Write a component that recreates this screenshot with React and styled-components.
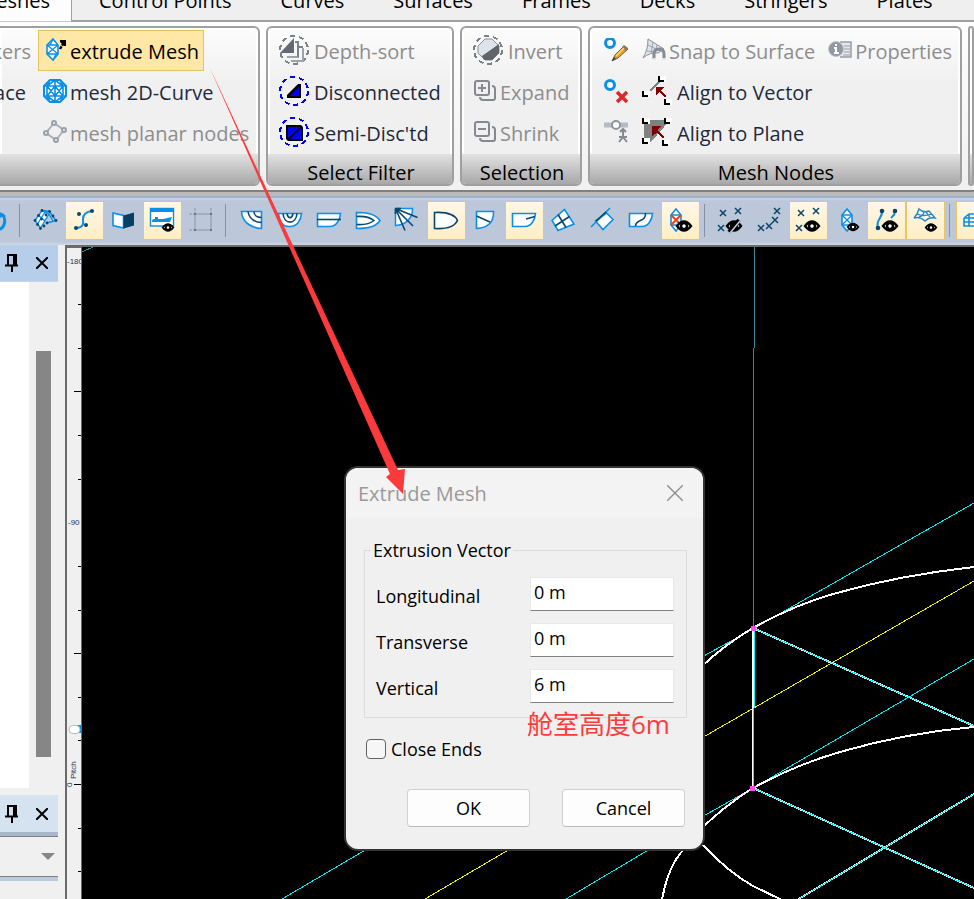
import React, { useState } from 'react'
import styled, { createGlobalStyle } from 'styled-components'

const GlobalStyle = createGlobalStyle`
    *{
        box-sizing: border-box;
    }
    body{
        margin: 0;
        background: #f0f0f0;
        font-family: 'Open Sans', 'Noto Sans', 'Noto Sans CJK SC', sans-serif;
        font-size: 20px;
        color: #000;
        overflow: hidden;
    }
    button, input{
        font: inherit;
        color: inherit;
        margin: 0;
    }
    svg{
        display: block;
        flex: none;
    }
`

const Page = styled.div`
    position: relative;
    display: flex;
    flex-direction: column;
    height: 100vh;
    overflow: hidden;
`

/* ---------- tabs ---------- */

const TabBar = styled.nav`
    display: flex;
    flex: none;
    height: 22px;
    overflow: hidden;
    background: #efefef;
`

const Tab = styled.button`
    display: flex;
    flex: none;
    align-items: flex-end;
    justify-content: flex-end;
    height: 22px;
    padding: 0 22px 6px 27px;
    border: 0;
    border-bottom: 2px solid #a0a0a0;
    background: transparent;
    line-height: 26px;
    white-space: nowrap;
    ${({ $active }) => $active && `
        width: 72px;
        padding: 0 21px 7px 0;
        background: #fdfdfd;
        border-right: 1px solid #a0a0a0;
        border-bottom: 1px solid #c8c8c8;
        overflow: hidden;
    `}
`

const TabFill = styled.div`
    flex: 1;
    border-bottom: 2px solid #a0a0a0;
`

/* ---------- ribbon ---------- */

const Ribbon = styled.div`
    display: flex;
    flex: none;
    gap: 6px;
    padding: 4px 0;
    background: linear-gradient(#ffffff, #f0f0f0);
`

const Group = styled.section`
    display: flex;
    flex-direction: column;
    flex: ${({ $width }) => ($width ? `0 0 ${$width}px` : '1')};
    height: 160px;
    border: 2px solid #a0a0a0;
    border-left-width: ${({ $cut }) => ($cut ? 0 : 2)}px;
    border-radius: ${({ $cut }) => ($cut ? '0 6px 6px 0' : '6px')};
    background: linear-gradient(#fcfcfc, #f0f0f0 35%);
    box-shadow: inset 0 0 0 2px #fff;
    overflow: hidden;
`

const GroupBody = styled.div`
    display: flex;
    flex: 1;
    gap: ${({ $gap }) => $gap || 0}px;
    padding: 2px 0 0 ${({ $pad }) => $pad}px;
`

const GroupTitle = styled.h2`
    flex: none;
    height: 30px;
    margin: 0;
    padding: 6px 0 0 2px;
    background: linear-gradient(#e2e2e2, #a8a8a8);
    font-size: 20px;
    font-weight: 400;
    line-height: 26px;
    text-align: center;
`

const Column = styled.div`
    display: flex;
    flex-direction: column;
    align-items: flex-start;
    flex: none;
`

const CutColumn = styled(Column)`
    width: 38px;
    align-items: flex-end;
    overflow: hidden;
`

const Row = styled.div`
    display: flex;
    gap: 3px;
`

const Command = styled.button`
    display: flex;
    flex: none;
    align-items: center;
    gap: ${({ $wide }) => ($wide ? 5 : 3)}px;
    height: 41px;
    padding: 2px 4px 0;
    border: 1px solid ${({ $active }) => ($active ? '#e5c365' : 'transparent')};
    background: ${({ $active }) => ($active ? '#ffe8a6' : 'transparent')};
    color: ${({ $active }) => ($active ? '#000' : '#1e2a3c')};
    line-height: 26px;
    white-space: nowrap;
    &:disabled{
        color: #8d8d8d;
    }
    svg{
        margin-top: -4px;
    }
`

const CutCommand = styled(Command)`
    padding-right: ${({ $inset }) => $inset}px;
`

/* ---------- toolbar ---------- */

const ToolBar = styled.div`
    display: flex;
    flex: none;
    height: 55px;
    padding-top: 4px;
    border-top: 2px solid #808080;
    background: linear-gradient(#bababa 4px, #9fb0cc 4px, #9fb0cc 6px, #c9d4e5 6px, #bcc7d9 9px, #bcc7d9 50px, #cbd5e4 52px);
    overflow: hidden;
`

const Tool = styled.button`
    display: flex;
    flex: 0 0 ${({ $cut }) => ($cut ? 15 : 39)}px;
    justify-content: flex-end;
    align-items: center;
    height: 39px;
    margin-top: 5px;
    padding: 0;
    border: 0;
    outline: ${({ $on }) => ($on ? '1px solid #e8c566' : 'none')};
    outline-offset: -1px;
    background: ${({ $on }) => ($on ? 'linear-gradient(#fff8e8, #ffeec4)' : 'transparent')};
    overflow: hidden;
`

const Divider = styled.span`
    flex: none;
    width: 1px;
    height: 33px;
    margin: 8px 6px 0 4px;
    background: #8592a6;
`

/* ---------- work area ---------- */

const WorkArea = styled.main`
    display: flex;
    flex: 1;
    min-height: 0;
    background: #f0f0f0;
`

const SidePanels = styled.aside`
    display: flex;
    flex-direction: column;
    flex: 0 0 58px;
    margin-right: 7px;
`

const PanelHeader = styled.header`
    display: flex;
    flex: none;
    align-items: center;
    gap: 17px;
    height: 37px;
    padding-left: 5px;
    background: ${({ $pale }) => ($pale ? '#d5e3f0' : '#b6cee9')};
    border-bottom: ${({ $pale }) => ($pale ? '0' : '1px solid #c5d5e8')};
`

const PanelButton = styled.button`
    display: flex;
    padding: 0;
    border: 0;
    background: transparent;
`

const PanelBody = styled.div`
    display: flex;
    flex: 1;
    justify-content: flex-end;
    margin-bottom: 7px;
    background: #fff;
`

const ScrollTrack = styled.div`
    width: 29px;
    padding: 69px 7px 31px;
    background: #f0f0f0;
`

const ScrollThumb = styled.div`
    height: 100%;
    background: #868686;
`

const PickerBox = styled.button`
    display: flex;
    flex: none;
    justify-content: flex-end;
    align-items: center;
    height: 49px;
    padding: 0 3px 0 0;
    border: solid;
    border-width: 4px 0;
    border-color: #a9b6cc #f0f0f0 #bccade;
    background: #f0f0f0;
    box-shadow: inset 0 1px #808080, inset 0 -1px #808080;
`

const BottomFill = styled.div`
    flex: 0 0 18px;
`

const Ruler = styled.div`
    flex: 0 0 17px;
    border: solid #6b6b6b;
    border-width: 3px 1px 0 2px;
    background: #f0f0f0;
    overflow: hidden;
    text{
        font-family: 'Liberation Sans', sans-serif;
        font-size: 8px;
        fill: #2a3550;
    }
`

const Viewport = styled.div`
    position: relative;
    flex: 1;
    border-top: 2px solid #6b6b6b;
    background: #000;
`

const Scene = styled.svg`
    position: absolute;
    inset: 0;
    width: 100%;
    height: 100%;
    fill: none;
`

/* ---------- dialog ---------- */

const Dialog = styled.form`
    position: absolute;
    left: 262px;
    top: 219px;
    width: 361px;
    border: 2px solid #343434;
    border-radius: 14px;
    background: #f0f0f0;
    font-size: 18px;
    overflow: hidden;
`

const DialogTitle = styled.header`
    display: flex;
    align-items: center;
    justify-content: space-between;
    height: 50px;
    padding: 0 20px 0 12px;
    background: #f3f3f3;
    color: #999;
    font-size: 20px;
`

const CloseButton = styled.button`
    padding: 0;
    border: 0;
    background: transparent;
`

const VectorBox = styled.fieldset`
    display: flex;
    flex-direction: column;
    gap: 12px;
    margin: 19px 16px 0 18px;
    padding: 14px 12px 14px 11px;
    border: 1px solid #dcdcdc;
    legend{
        margin-left: -5px;
        padding: 0 2px;
        line-height: 26px;
    }
`

const Field = styled.div`
    display: flex;
    justify-content: space-between;
    label{
        padding-top: 5px;
        line-height: 28px;
    }
    input{
        width: 144px;
        height: 34px;
        padding: 0 3px 5px;
        border: 1px solid #e8e8e8;
        border-bottom-color: #808080;
        background: #fff;
        outline: none;
    }
`

const CheckLabel = styled.label`
    display: flex;
    align-items: center;
    gap: 5px;
    margin: 18px 0 0 20px;
    line-height: 26px;
    input{
        appearance: none;
        width: 20px;
        height: 20px;
        border: 1px solid #626262;
        border-radius: 4px;
        background: #f6f6f6;
    }
    input:checked{
        background: #0067c0;
    }
`

const DialogActions = styled.div`
    display: flex;
    justify-content: flex-end;
    gap: 32px;
    padding: 27px 18px 22px;
`

const PushButton = styled.button`
    width: 123px;
    height: 38px;
    padding: 0;
    border: 1px solid #d0d0d0;
    border-bottom-color: #bcbcbc;
    border-radius: 4px;
    background: #fdfdfd;
`

/* ---------- notes over the window ---------- */

const ArrowNote = styled.svg`
    position: absolute;
    left: 200px;
    top: 60px;
    pointer-events: none;
`

const TextNote = styled.p`
    position: absolute;
    left: 527px;
    top: 705px;
    margin: 0;
    color: #ff3b3b;
    font-size: 26px;
    line-height: 38px;
`

const BLUE = '#0a8fe6'
const NAVY = '#0b466b'

/* ---------- ribbon icons ---------- */

const Icon24 = ({ children }) => (
    <svg width='24' height='24' viewBox='0 0 24 24' fill='none'>{children}</svg>
)

const Icon30 = ({ children }) => (
    <svg width='30' height='30' viewBox='0 0 30 30' fill='none'>{children}</svg>
)

const ExtrudeIcon = () => (
    <Icon24>
        <path d='M10 1 L15 7 V16 L10 22 L4 16 V7 Z' fill='#fff' stroke={BLUE} strokeWidth='1.6' />
        <path d='M4 7 H15 M4 16 H15 M4 7 L15 16 M15 7 L4 16 M10 1 L7 7 M10 22 L13 16' stroke={BLUE} strokeWidth='1.3' />
        <path d='M17 11 L20 6' stroke='#000' strokeWidth='2.4' strokeDasharray='3 1' />
        <path d='M17 2 H23 V8 H21 L17 4 Z' fill='#000' />
    </Icon24>
)

const CurveMeshIcon = () => (
    <Icon24>
        <path d='M7 1 H17 L23 7 V17 L17 23 H7 L1 17 V7 Z' fill='#fff' stroke={BLUE} strokeWidth='2' />
        <path d='M12 1 V23 M1 7 H23 M1 17 H23 M7 1 L4 7 L12 17 L20 7 L17 1 M7 23 L4 17 L12 7 L20 17 L17 23 M12 1 L4 7 V17 L12 23 L20 17 V7 Z' stroke={BLUE} strokeWidth='1.6' />
    </Icon24>
)

const PlanarIcon = () => (
    <Icon24>
        <path d='M11 3 L21 10 L13 20 L3 13 Z' stroke='#a9b0b8' strokeWidth='2' />
        <g fill='#efefef' stroke='#9aa0a8' strokeWidth='2'>
            <circle cx='11' cy='3' r='2' /><circle cx='21' cy='10' r='2' />
            <circle cx='13' cy='20' r='2' /><circle cx='3' cy='13' r='2' />
        </g>
    </Icon24>
)

const Ring = ({ color }) => (
    <circle cx='15' cy='15' r='14' stroke={color} strokeWidth='2' strokeDasharray='5 3.8' shapeRendering='crispEdges' />
)

const DepthIcon = () => (
    <Icon30>
        <Ring color='#7c8087' />
        <path d='M24 13 V26 H12 M19 9 V22 H8' stroke='#9da3ab' strokeWidth='2' />
        <path d='M15 3 V18 H1 Z' fill='#656a72' />
        <path d='M16 7 H19 V22 M20 12 H24' stroke='#7c8087' strokeWidth='2' />
    </Icon30>
)

const DisconnectedIcon = () => (
    <Icon30>
        <Ring color='#0000ff' />
        <path d='M8 21 V19 L19 8 H22 V22 H8 Z' fill='#000' />
        <path d='M11 20 L20 11 V20 Z' fill='#0000ff' />
    </Icon30>
)

const SemiIcon = () => (
    <Icon30>
        <Ring color='#0000ff' />
        <path d='M7 8 H22 L24 10 V24 H9 L7 22 Z' fill='#000' />
        <path d='M9 10 H21 L9 21 Z M22 11 V22 H11 Z' fill='#0000ff' />
    </Icon30>
)

const InvertIcon = () => (
    <Icon30>
        <Ring color='#7c8087' />
        <path d='M12 4 H19 L26 11 V18 L19 25 H12 L5 18 V11 Z' fill='#dfe4ea' stroke='#8a8f96' />
        <path d='M26 9 V18 L19 25 H11 L9 21 Z' fill='#5f646d' />
    </Icon30>
)

const StackIcon = ({ plus }) => (
    <Icon24>
        <rect x='2' y='2' width='14' height='14' rx='2' stroke='#85898f' strokeWidth='2' />
        <path d='M19 7 C21 7 22 8 22 10 V19 Q22 21 20 21 H10 Q7 21 7 18' stroke='#85898f' strokeWidth='2' />
        <path d={plus ? 'M5 9 H13 M9 5 V13' : 'M5 9 H13'} stroke='#85898f' strokeWidth='2' />
    </Icon24>
)

const EditNodeIcon = () => (
    <Icon24>
        <circle cx='6' cy='5' r='4.5' stroke={BLUE} strokeWidth='3' fill='#fff' />
        <path d='M8 23 L11 17 L20 8 L24 11 L14 20 Z' fill='#e2a02c' stroke='#7b5b2c' />
        <path d='M18 9 L20 7 L24 10 L22 13 Z' fill='#8d7468' />
        <path d='M12 18 L20 10' stroke='#ffd56d' strokeWidth='1.5' />
        <path d='M8 23 L10 19 L12 21 Z' fill='#444' />
    </Icon24>
)

const DeleteNodeIcon = () => (
    <Icon24>
        <circle cx='6' cy='6' r='4.5' stroke={BLUE} strokeWidth='3' fill='#fff' />
        <path d='M13 13 L23 23 M23 13 L13 23' stroke='#dc2a2a' strokeWidth='3.5' />
    </Icon24>
)

const SplitNodeIcon = () => (
    <Icon24>
        <path d='M0 5 H24' stroke='#b4bbc4' strokeWidth='5' />
        <circle cx='12' cy='5' r='4' fill='#fff' stroke='#8f959d' strokeWidth='2' />
        <path d='M19 9 V17 L15 22 M19 17 L23 22 M16 12 L19 9 L22 12 M15 17 H23' stroke='#858a91' strokeWidth='2' />
    </Icon24>
)

const SnapIcon = () => (
    <Icon24>
        <path d='M6 1 L22 11 L16 15 Q8 14 1 20 Q6 12 6 1 Z' fill='#dfe5ea' stroke='#8a9097' />
        <path d='M11 4 L9 16 M15 7 L13 15 M6 7 L18 13 M5 13 L14 14' stroke='#9aa0a8' />
        <path d='M12 21 V16 Q12 11 17 11 Q22 11 22 16 V21' stroke='#868c94' strokeWidth='3' />
        <path d='M11 21 H14 M20 21 H24' stroke='#dfe5ea' strokeWidth='2' />
    </Icon24>
)

const PropertiesIcon = () => (
    <Icon24>
        <path d='M12 4 H23 V19 H12' stroke='#979da5' fill='#e4e8ec' strokeWidth='1.5' />
        <path d='M16 8 H22 M16 11 H22 M16 14 H22 M15 17 H22' stroke='#979da5' />
        <circle cx='8' cy='11' r='7.5' fill='#9298a0' stroke='#c2c7cd' />
        <path d='M8 6 V8 M6 10 H8 V15 M6 15 H11' stroke='#fff' strokeWidth='2' />
    </Icon24>
)

const Corner = ({ x, y }) => (
    <g>
        <path d={`M${x} ${y} h7 v6 h-7 Z`} fill='#fff' />
        <path d={`M${x} ${y} v5 h5`} stroke='#000' strokeWidth='2' />
    </g>
)

const VectorIcon = () => (
    <Icon30>
        <g shapeRendering='crispEdges'>
            <path d='M8 15 L17 6' stroke='#808080' strokeWidth='2' />
            <Corner x={17} y={0} /><Corner x={1} y={15} /><Corner x={23} y={23} />
            <path d='M14 11 H22 L19 14 L24 20 L23 21 L17 16 L14 19 Z' fill='#800000' />
        </g>
    </Icon30>
)

const PlaneIcon = () => (
    <Icon30>
        <g shapeRendering='crispEdges'>
            <path d='M2 3 H28 L9 25 H2 Z' fill='#808080' />
            <Corner x={1} y={1} /><Corner x={23} y={1} /><Corner x={1} y={21} /><Corner x={21} y={23} />
            <path d='M10 9 H19 L16 13 L22 20 L21 21 L15 16 L10 19 Z' fill='#800000' />
        </g>
    </Icon30>
)

/* ---------- toolbar icons ---------- */

const Eye = ({ x, y, r = 8, off }) => (
    <g transform={`translate(${x} ${y}) scale(${r / 8})`}>
        <path d='M-7 0 Q0 -9 7 0 Q0 9 -7 0 Z' fill='#fff' stroke='#000' strokeWidth='2.4' />
        <circle r='3' fill='#fff' stroke='#000' strokeWidth='2.6' />
        {off && <path d='M-5 6 L5 -6' stroke='#000' strokeWidth='4' />}
        {off && <path d='M-4 7 L6 -5' stroke='#bcc7d9' strokeWidth='1.6' />}
    </g>
)

const Cross = ({ x, y }) => (
    <path d={`M${x - 3} ${y - 3} l6 6 m0 -6 l-6 6`} stroke={NAVY} strokeWidth='1.5' />
)

const Crystal = ({ x, hot }) => (
    <g>
        <path d={`M${x} 8 l5 6 v10 l-5 6 l-5 -6 v-10 Z`} fill='#fff' stroke={BLUE} strokeWidth='1.6' />
        <path d={`M${x - 5} 14 h10 m-10 10 h10`} stroke={BLUE} strokeWidth='1.3' />
        <path d={`M${x - 5} 14 l10 10 m0 -10 l-10 10`} stroke={hot ? '#f04018' : BLUE} strokeWidth={hot ? 2 : 1.4} />
    </g>
)

const HULL = 'M7.5 12.5 H30.5 C30 19 26 25.5 20 25.5 H7.5 Z'

const toolIcons = {
    rotate: (
        <g>
            <path d='M26 13 C31 18 29 29 20 29' stroke={BLUE} strokeWidth='3' />
            <path d='M21 9 L30 15 L23 17 Z' fill={BLUE} />
        </g>
    ),
    surface: (
        <g>
            <path d='M16 9.5 L23 13 L14.5 27 L9 19.5 Z' fill='#fff' />
            <path d='M16 9.5 L23.5 10.5 L30 19.5 L21 22 M23 13 L14.5 27 L9 19.5 L16 9.5 L23 13 L27 20 M12.5 14.5 L19 20 M19 11 L11.5 23' stroke={BLUE} strokeWidth='1.4' />
            <g fill={NAVY}>
                {[[16, 9.5], [23.5, 10.5], [30, 19.5], [27, 15], [9, 19.5], [14.5, 27.5], [21, 22], [12.5, 14.5], [15.5, 18], [20, 14], [11.5, 23.5], [18, 25]].map(([x, y]) => (
                    <circle key={`${x}-${y}`} cx={x} cy={y} r='1.4' />
                ))}
            </g>
        </g>
    ),
    curve: (
        <g>
            <path d='M11 27 C20 26 18 22 18 18 S20 11 27 10' stroke={BLUE} strokeWidth='2' />
            <g fill={NAVY}>
                <circle cx='14' cy='13' r='2' /><circle cx='27' cy='10' r='2' />
                <circle cx='21' cy='24' r='2' /><circle cx='11' cy='27' r='2' />
            </g>
        </g>
    ),
    shade: (
        <g>
            <path d='M9 12 L19.5 14.5 V27 L9 24.5 Z' fill='#fff' stroke={BLUE} strokeWidth='1.6' />
            <path d='M19.5 14.5 L30 11.5 V24.5 L19.5 27.5 Z' fill='#063f66' />
        </g>
    ),
    ship: (
        <g>
            <rect x='7.5' y='7.5' width='23' height='17.5' fill='#fff' stroke={BLUE} strokeWidth='1.4' />
            <path d='M7 7 H31 V11 H7 Z' fill={BLUE} />
            <path d='M9 20 L10 18 h2 v-2 h3 v2 h5 l9 -2 l-2 5 H9 Z' fill={BLUE} />
            <Eye x={25} y={26.5} r={6} />
        </g>
    ),
    grid: (
        <g stroke='#8d95a3' strokeWidth='1'>
            <path d='M13 13 H29 V29 H13 Z' />
            <path d='M13 7 V12 M29 7 V12 M7 13 H12 M7 29 H12' strokeDasharray='3 1' />
            <path d='M12.5 12.5 h1 v1 h-1 Z M28.5 12.5 h1 v1 h-1 Z M12.5 28.5 h1 v1 h-1 Z M28.5 28.5 h1 v1 h-1 Z' fill='#5d6675' stroke='#5d6675' />
        </g>
    ),
    quarter: (
        <g>
            <path d='M9.5 10.5 H29.5 V27.5 C19 27 10 21 9.5 10.5 Z' fill='#fff' stroke={BLUE} strokeWidth='1.6' />
            <path d='M16 10.5 C17 17 22 21 29.5 21.5 M22 10.5 C22 14 25 16.5 29.5 16.5' stroke={NAVY} strokeWidth='1.6' />
        </g>
    ),
    bowl: (
        <g>
            <path d='M7.5 12.5 H30.5 C30 19 26 25.5 19 25.5 H17 C11 25 8 19 7.5 12.5 Z' fill='#fff' stroke={BLUE} strokeWidth='1.6' />
            <path d='M12 12.5 C13 24 25 24 26 12.5 M16 12.5 C17 18 21 18 22 12.5' stroke={NAVY} strokeWidth='1.6' />
        </g>
    ),
    waterline: (
        <g>
            <path d={HULL} fill='#fff' stroke={BLUE} strokeWidth='1.6' />
            <path d='M7 18.5 H31' stroke={NAVY} strokeWidth='1.6' />
        </g>
    ),
    plan: (
        <g>
            <path d='M7.5 11.5 C16 11.5 26 12 31 19.5 C26 27 16 27.5 7.5 27.5 Z' fill='#fff' stroke={BLUE} strokeWidth='1.6' />
            <path d='M7.5 15.5 C16 15 22 17 25 19.5 C22 22 16 24 7.5 23.5' stroke={NAVY} strokeWidth='1.6' />
        </g>
    ),
    rays: (
        <g>
            <path d='M7.5 7.5 H24.5 C25 17 18 24 7.5 24.5 Z' fill='#fff' stroke={BLUE} strokeWidth='1.5' />
            <path d='M7.5 7.5 L29.5 16.5 M7.5 7.5 L25 25 M7.5 7.5 L17 29.5 M7.5 7.5 V13 M7.5 7.5 H13' stroke={NAVY} strokeWidth='1.6' />
        </g>
    ),
    section: <path d='M7.5 11.5 C16 11 27 12 30.5 19.5 C27 27 16 28 7.5 27.5 Z' fill='#fff' stroke={NAVY} strokeWidth='1.6' />,
    corner: (
        <g>
            <path d='M10.5 10.5 H27.5 C28 21 22 27 10.5 27.5 Z' fill='#fff' stroke={BLUE} strokeWidth='1.6' />
            <path d='M10.5 15 L24 21' stroke={NAVY} strokeWidth='1.6' />
        </g>
    ),
    notch: (
        <g>
            <path d={HULL} fill='#fff' stroke={BLUE} strokeWidth='1.6' />
            <path d='M30 15.5 L21 18' stroke={NAVY} strokeWidth='1.6' />
        </g>
    ),
    patch: (
        <g>
            <path d='M8 19.5 L20.5 8.5 L30 23 L14 29.5 Z' fill='#fff' stroke={BLUE} strokeWidth='1.6' />
            <path d='M14 13.5 L22 26.5 M25.5 15.5 L11 25' stroke={NAVY} strokeWidth='1.6' />
        </g>
    ),
    tilt: (
        <g>
            <path d='M12.5 20 L20 28.5 L30 18.5 L23.5 12 Z' fill='#fff' stroke={BLUE} strokeWidth='1.6' />
            <path d='M8 26 L27 7' stroke={BLUE} strokeWidth='1.6' />
            <path d='M13 20 L23 11' stroke={NAVY} strokeWidth='1.6' />
        </g>
    ),
    sweep: (
        <g>
            <path d={HULL} fill='#fff' stroke={BLUE} strokeWidth='1.6' />
            <path d='M23.5 12 C24 22 14 17 13.5 25' stroke={NAVY} strokeWidth='1.6' />
        </g>
    ),
    crystalHot: <g><Crystal x={15} hot /><Eye x={23} y={25} /></g>,
    pointsOff: <g><Cross x={12} y={12} /><Cross x={27} y={10} /><Cross x={10} y={27} /><Eye x={23} y={25} off /></g>,
    points: <g><Cross x={27} y={10} /><Cross x={25} y={19} /><Cross x={19} y={25} /><Cross x={11} y={27} /></g>,
    pointsOn: <g><Cross x={12} y={12} /><Cross x={27} y={10} /><Cross x={10} y={27} /><Eye x={23} y={25} /></g>,
    crystal: <g><Crystal x={19} /><Eye x={25} y={26} r={6} /></g>,
    curvesOn: (
        <g>
            <path d='M15 10 C16 18 8 18 11 27 M28 10 C28 14 26 15 24 17' stroke={BLUE} strokeWidth='2' />
            <g fill={NAVY}><circle cx='15' cy='10' r='2.3' /><circle cx='28' cy='10' r='2.3' /><circle cx='11' cy='27' r='2.3' /></g>
            <Eye x={23} y={25} />
        </g>
    ),
    surfaceOn: (
        <g>
            <path d='M13 8 Q17 12 23 10 L29 17 Q23 16 19 20 Q14 15 8 17 Q12 13 13 8 Z' fill='#fff' stroke='#2c87c0' strokeWidth='1.5' />
            <path d='M11 13 Q17 16 26 13 M18 11 Q17 15 13 16 M20 11 L24 16' stroke='#2c87c0' strokeWidth='1.3' />
            <Eye x={25} y={26.5} r={6} />
        </g>
    ),
    body: (
        <path d='M8 17 L13 13 H31 M8 17 H31 M8 17 V25 H31 M8 21 H31 M13 13 V25' stroke={BLUE} strokeWidth='1.6' />
    ),
}

const toolGroups = [
    [['surface'], ['curve', true], ['shade'], ['ship', true], ['grid']],
    [['quarter'], ['bowl'], ['waterline'], ['plan'], ['rays'], ['section', true], ['corner'], ['notch', true], ['patch'], ['tilt'], ['sweep'], ['crystalHot', true]],
    [['pointsOff'], ['points'], ['pointsOn', true], ['crystal'], ['curvesOn', true], ['surfaceOn', true]],
    [['body', true]],
]

const ToolButton = ({ name, on, cut }) => (
    <Tool type='button' aria-label={name} $on={on} $cut={cut}>
        <svg width='39' height='39' viewBox='0 0 39 39' fill='none'>{toolIcons[name]}</svg>
    </Tool>
)

/* ---------- panels ---------- */

const PanelTools = ({ pale }) => (
    <PanelHeader $pale={pale}>
        <PanelButton type='button' aria-label='pin'>
            <svg width='14' height='18' viewBox='0 0 14 18' fill='none' stroke='#000' strokeWidth='2'>
                <path d='M3 11 V1 H11 V11 M0 11.5 H13 M7 11 V18' />
                <path d='M9 2 V11' />
            </svg>
        </PanelButton>
        <PanelButton type='button' aria-label='close'>
            <svg width='12' height='12' viewBox='0 0 12 12' stroke='#000' strokeWidth='2'>
                <path d='M0 0 L12 12 M12 0 L0 12' />
            </svg>
        </PanelButton>
    </PanelHeader>
)

const ticks = [
    [56, 3], [100, 3], [143, 7], [187, 3], [231, 3], [318, 3], [362, 3],
    [405, 7], [449, 3], [492, 3], [536, 7], [580, 3], [623, 3],
]

const PitchRuler = () => (
    <Ruler>
        <svg width='14' height='651' viewBox='0 0 14 651'>
            <text x='0' y='16'>-180</text>
            <text x='1' y='277'>-90</text>
            <text transform='translate(5 539) rotate(-90)'>0</text>
            <text fontSize='9' transform='translate(9 531) rotate(-90)'>Pitch</text>
            {ticks.map(([y, len]) => (
                <path key={y} d={`M${14 - len} ${y}.5 H14`} stroke='#000' />
            ))}
            <path d='M10 477 h4 v8 h-4 Z' fill={BLUE} />
            <rect x='2' y='477.5' width='11' height='8' rx='4' fill='#fff' stroke='#b9b9b9' />
        </svg>
    </Ruler>
)

const Wireframe = () => (
    <Scene aria-hidden='true'>
        <g transform='translate(-82 -247)' shapeRendering='crispEdges'>
            <path d='M754.5 247 V348 M753.5 348 V627 M82 252 L93 247' stroke='#3b8797' />
            <g stroke='#00e8f0'>
                <path d='M974 503 L753 629 L700 658' />
                <path d='M974 659 L755 787 L700 818' />
                <path d='M650 849 L566 899 M367 849 L282 899' />
            </g>
            <path d='M974 581 L700 739 M510 849 L425 899' stroke='#f0f000' />
            <g stroke='#fff' strokeWidth='2'>
                <path d='M700 668 Q724 645 753 628 Q792 606 833 594 Q900 575 974 567' />
                <path d='M700 830 Q724 806 753 788 Q795 765 840 752 Q905 733 974 727' />
                <path d='M753 628 L974 726 M753 788 L974 888 M974 794 L797 900 M753 628 V788' />
                <path d='M703 845 Q728 872 753 886 L782 900 M684 849 Q668 866 662 900' />
            </g>
            <path d='M753 628 L974 726 M753 788 L974 888 M974 794 L797 900 M754.5 630 V708 M753.5 708 V788' stroke='#00f4fa' />
            <path d='M751 626 h5 v5 h-5 Z M750 786 h5 v5 h-5 Z' fill='#ff4df5' />
        </g>
    </Scene>
)

/* ---------- dialog ---------- */

const axes = [
    ['Longitudinal', '0 m'],
    ['Transverse', '0 m'],
    ['Vertical', '6 m'],
]

const ExtrudeDialog = () => {
    const [vector, setVector] = useState(axes.map(([, value]) => value))

    return (
        <Dialog onSubmit={(e) => e.preventDefault()}>
            <DialogTitle>
                <span>Extrude Mesh</span>
                <CloseButton type='button' aria-label='Close'>
                    <svg width='16' height='16' viewBox='0 0 16 16' stroke='#8e8e8e' strokeWidth='1.4'>
                        <path d='M0 0 L16 16 M16 0 L0 16' />
                    </svg>
                </CloseButton>
            </DialogTitle>
            <VectorBox>
                <legend>Extrusion Vector</legend>
                {axes.map(([name], i) => (
                    <Field key={name}>
                        <label htmlFor={name}>{name}</label>
                        <input
                            id={name}
                            value={vector[i]}
                            onChange={(e) => setVector(vector.map((v, n) => (n === i ? e.target.value : v)))}
                        />
                    </Field>
                ))}
            </VectorBox>
            <CheckLabel>
                <input type='checkbox' />
                Close Ends
            </CheckLabel>
            <DialogActions>
                <PushButton type='submit'>OK</PushButton>
                <PushButton type='button'>Cancel</PushButton>
            </DialogActions>
        </Dialog>
    )
}

const tabs = ['Control Points', 'Curves', 'Surfaces', 'Frames', 'Decks', 'Stringers', 'Plates']

export default function App() {
    return (
        <Page>
            <GlobalStyle />
            <TabBar>
                <Tab $active>Meshes</Tab>
                {tabs.map((name) => <Tab key={name}>{name}</Tab>)}
                <TabFill />
            </TabBar>

            <Ribbon>
                <Group $width={260} $cut>
                    <GroupBody $pad={0}>
                        <CutColumn>
                            <CutCommand $inset={6} disabled>Markers</CutCommand>
                            <CutCommand $inset={11}>Surface</CutCommand>
                        </CutColumn>
                        <Column>
                            <Command $active><ExtrudeIcon />extrude Mesh</Command>
                            <Command><CurveMeshIcon />mesh 2D-Curve</Command>
                            <Command disabled><PlanarIcon />mesh planar nodes</Command>
                        </Column>
                    </GroupBody>
                    <GroupTitle />
                </Group>
                <Group $width={188}>
                    <GroupBody $pad={6}>
                        <Column>
                            <Command $wide disabled><DepthIcon />Depth-sort</Command>
                            <Command $wide><DisconnectedIcon />Disconnected</Command>
                            <Command $wide><SemiIcon />Semi-Disc'td</Command>
                        </Column>
                    </GroupBody>
                    <GroupTitle>Select Filter</GroupTitle>
                </Group>
                <Group $width={122}>
                    <GroupBody $pad={6}>
                        <Column>
                            <Command $wide disabled><InvertIcon />Invert</Command>
                            <Command disabled><StackIcon plus />Expand</Command>
                            <Command disabled><StackIcon />Shrink</Command>
                        </Column>
                    </GroupBody>
                    <GroupTitle>Selection</GroupTitle>
                </Group>
                <Group $width={374}>
                    <GroupBody $pad={9} $gap={4}>
                        <Column>
                            <Command aria-label='edit node'><EditNodeIcon /></Command>
                            <Command aria-label='delete node'><DeleteNodeIcon /></Command>
                            <Command aria-label='split node' disabled><SplitNodeIcon /></Command>
                        </Column>
                        <Column>
                            <Row>
                                <Command disabled><SnapIcon />Snap to Surface</Command>
                                <Command disabled><PropertiesIcon />Properties</Command>
                            </Row>
                            <Command $wide><VectorIcon />Align to Vector</Command>
                            <Command $wide><PlaneIcon />Align to Plane</Command>
                        </Column>
                    </GroupBody>
                    <GroupTitle>Mesh Nodes</GroupTitle>
                </Group>
                <Group>
                    <GroupBody $pad={0} />
                    <GroupTitle />
                </Group>
            </Ribbon>

            <ToolBar>
                <ToolButton name='rotate' cut />
                {toolGroups.map((group, i) => (
                    <React.Fragment key={i}>
                        <Divider />
                        {group.map(([name, on]) => <ToolButton key={name} name={name} on={on} />)}
                    </React.Fragment>
                ))}
            </ToolBar>

            <WorkArea>
                <SidePanels>
                    <PanelTools />
                    <PanelBody>
                        <ScrollTrack><ScrollThumb /></ScrollTrack>
                    </PanelBody>
                    <PanelTools pale />
                    <PickerBox type='button' aria-label='choose'>
                        <svg width='14' height='7' viewBox='0 0 14 7'><path d='M0 0 H14 L7 7 Z' fill='#868686' /></svg>
                    </PickerBox>
                    <BottomFill />
                </SidePanels>
                <PitchRuler />
                <Viewport>
                    <Wireframe />
                    <ExtrudeDialog />
                </Viewport>
            </WorkArea>

            <ArrowNote width='220' height='440' viewBox='200 60 220 440' aria-hidden='true'>
                <path d='M209 66 L398 470 L405 469 L403 494 L386 477 L390 474 Z' fill='#fb3b3b' />
            </ArrowNote>
            <TextNote>舱室高度6m</TextNote>
        </Page>
    )
}
